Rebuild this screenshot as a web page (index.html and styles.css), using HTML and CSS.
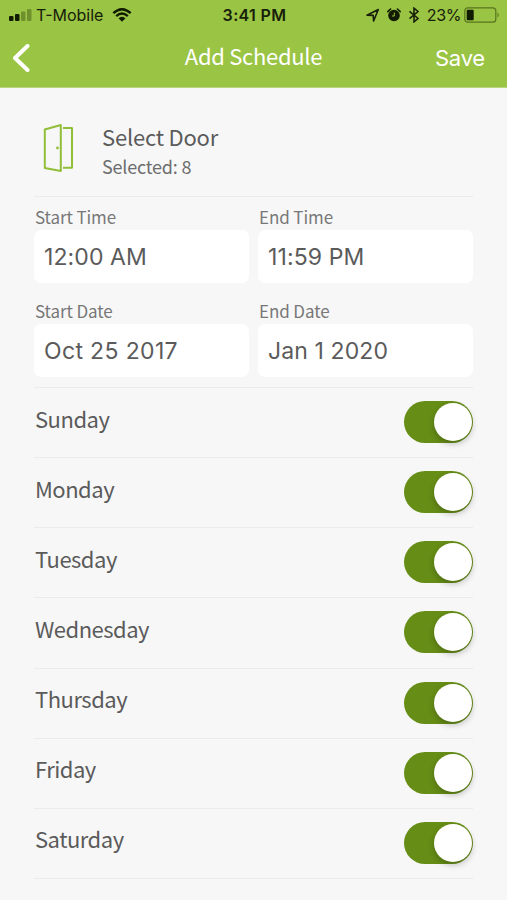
FILE: index.html
```html
<!DOCTYPE html>
<html lang="en">
<head>
<meta charset="utf-8">
<title>Add Schedule</title>
<link rel="stylesheet" href="styles.css">
</head>
<body>
<header class="top">
  <div class="status">
    <div class="carrier">
      <svg class="signal" width="23" height="12" viewBox="0 0 23 12"><rect y="7" width="4.5" height="5" rx="1"/><rect x="6" y="5" width="4.5" height="7" rx="1"/><g opacity=".3"><rect x="12" y="2.5" width="4.5" height="9.5" rx="1"/><rect x="18" width="4.5" height="12" rx="1"/></g></svg>
      <span class="network">T-Mobile</span>
      <svg class="wifi" width="20" height="14" viewBox="0 0 20 14"><path d="M1.3 5.2Q10-2.8 18.7 5.2M4.2 8.1Q10 2.9 15.8 8.1" fill="none" stroke="#111b00" stroke-width="2.3"/><path d="M6.5 10.2Q10 7.2 13.5 10.2L10 13.7Z"/></svg>
    </div>
    <span class="clock">3:41 PM</span>
    <div class="indicators">
      <svg width="14" height="14" viewBox="0 0 14 14"><path d="M1 7.2 12.3 1.5 7.6 13 7.2 7.4Z" fill="none" stroke="#17200a" stroke-width="1.6" stroke-linejoin="round"/></svg>
      <svg width="14" height="14" viewBox="0 0 14 14"><circle cx="7" cy="7.5" r="5.8"/><path d="M.8 3.6 3.6 1M13.2 3.6 10.4 1" stroke="#111b00" stroke-width="1.6" stroke-linecap="round"/><path d="M7.3 4.5V8H5" fill="none" stroke="#9ac443" stroke-width="1"/></svg>
      <svg width="12" height="16" viewBox="0 0 12 16"><path d="M1.5 4.3 10 11.5 6 14.8V1.2L10 4.5 1.5 11.7" fill="none" stroke="#17200a" stroke-width="1.6"/></svg>
      <span class="percent">23%</span>
      <svg class="battery" width="36" height="16" viewBox="0 0 36 16"><rect x=".8" y=".8" width="31" height="14.4" rx="3" fill="none" stroke="#58731f" stroke-width="1.2"/><rect x="2.7" y="2.7" width="7" height="10.6" rx="1"/><path d="M33.5 5.5Q36 8 33.5 10.5Z" fill="#58731f"/></svg>
    </div>
  </div>
  <nav class="bar">
    <svg class="back" width="20" height="30" viewBox="0 0 20 30"><path d="M16.5 2 4 14 16.5 26" fill="none" stroke="#fff" stroke-width="4" stroke-linecap="round" stroke-linejoin="round"/></svg>
    <h1>Add Schedule</h1>
    <span class="save">Save</span>
  </nav>
</header>
<main>
  <section class="door">
    <svg class="door-icon" width="32" height="50" viewBox="0 0 32 50"><g fill="none" stroke="#91bf39" stroke-width="2" stroke-linejoin="round"><path d="M2.8 6.5 18.8 2V48L2.8 45Z"/><path d="M21 5H30V44.8H21"/></g><circle cx="15.5" cy="25" r="1.4" fill="#91bf39"/></svg>
    <div><h2>Select Door</h2><p>Selected: 8</p></div>
  </section>
  <section class="fields">
    <div class="field"><label>Start Time</label><div class="value">12:00 AM</div></div>
    <div class="field"><label>End Time</label><div class="value">11:59 PM</div></div>
    <div class="field"><label>Start Date</label><div class="value date">Oct 25 2017</div></div>
    <div class="field"><label>End Date</label><div class="value">Jan 1 2020</div></div>
  </section>
  <ul class="days">
    <li><span>Sunday</span><i class="toggle"></i></li>
    <li><span>Monday</span><i class="toggle"></i></li>
    <li><span>Tuesday</span><i class="toggle"></i></li>
    <li><span>Wednesday</span><i class="toggle"></i></li>
    <li><span>Thursday</span><i class="toggle"></i></li>
    <li><span>Friday</span><i class="toggle"></i></li>
    <li><span>Saturday</span><i class="toggle"></i></li>
  </ul>
</main>
</body>
</html>
```
FILE: styles.css
```css
* { box-sizing: border-box; margin: 0; padding: 0; }
body { height: 900px; overflow: hidden; background: #f7f7f7; color: #5b5b5b; font-family: "Noto Sans CJK SC", "Noto Sans", sans-serif; }
svg { display: block; flex: none; fill: #111b00; }
.top { height: 88px; background: #9ac443; border-bottom: 1px solid #b8d57d; }
.status { height: 30px; display: grid; grid-template-columns: 1fr auto 1fr; align-items: center; padding: 0 7px 0 9px; font-family: Inter, sans-serif; font-size: 16px; line-height: 30px; color: #17200a; }
.carrier, .indicators { display: flex; align-items: center; }
.network { margin-left: 4px; letter-spacing: 0; }
.wifi { margin-left: 9px; }
.clock { font-weight: 600; letter-spacing: .35px; }
.indicators { justify-content: flex-end; gap: 7px; }
.percent { letter-spacing: -.4px; }
.battery { margin-left: -4px; }
.bar { height: 57px; display: grid; grid-template-columns: 1fr auto 1fr; align-items: center; padding: 0 11px; color: #fff; }
.bar h1 { font-size: 22px; font-weight: 400; letter-spacing: -.3px; line-height: 30px; padding-bottom: 8px; }
.save { justify-self: end; margin-right: 11px; padding-bottom: 2px; font: 22px/30px Inter, sans-serif; letter-spacing: -.2px; }
main { padding: 0 34px; }
.door { height: 109px; display: flex; gap: 28px; border-bottom: 1px solid #ebebeb; padding: 33px 0 0 8px; }
.door-icon { margin-top: 2px; }
.door h2 { font-size: 22px; font-weight: 400; letter-spacing: -.2px; line-height: 30px; }
.door p { font-size: 18px; line-height: 26px; letter-spacing: -.2px; margin-top: 2px; color: #6d6d6d; }
.fields { height: 190px; display: grid; grid-template-columns: 215px 215px; column-gap: 9px; grid-auto-rows: 94px; padding-top: 9px; }
.field label { display: block; height: 24px; padding-left: 1px; font-size: 17px; line-height: 21px; letter-spacing: -.1px; color: #777; }
.value { height: 53px; padding: 1px 0 0 10px; border-radius: 7px; background: #fff; font: 23px/53px Inter, sans-serif; letter-spacing: .1px; }
.date { letter-spacing: .35px; }
.days { list-style: none; border-top: 1px solid #ebebeb; }
.days li { height: 70.15px; display: flex; justify-content: space-between; align-items: center; border-bottom: 1px solid #ebebeb; }
.days span { font-size: 22px; line-height: 32px; padding: 0 0 10px 1px; letter-spacing: -.5px; }
.toggle { width: 69px; height: 42px; margin-bottom: 1px; border-radius: 21px; padding: 2px 1px; background: #668d16; display: flex; justify-content: flex-end; }
.toggle::before { content: ""; width: 38px; height: 38px; border-radius: 50%; background: #fff; box-shadow: 0 3px 6px rgba(0,0,0,.23); }
```
